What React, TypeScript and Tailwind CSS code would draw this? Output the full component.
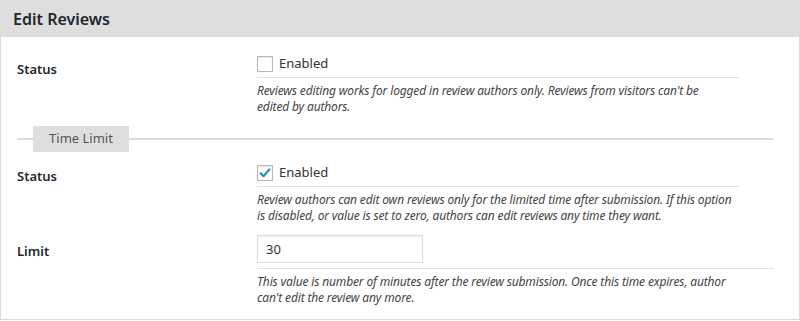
import React from 'react'

const font = { fontFamily: '"Noto Sans", "Open Sans", sans-serif' }

function Checkbox({ checked }: { checked?: boolean }) {
  return (
    <span className="flex h-4 w-4 items-center justify-center border border-[#b4b9be] bg-white shadow-[inset_0_1px_2px_rgba(0,0,0,0.1)]">
      {checked && (
        <svg viewBox="0 0 16 16" className="h-[14px] w-[14px]">
          <path d="M3 8.2 L6.4 11.6 L13 4" fill="none" stroke="#1e8cbe" strokeWidth="2.4" strokeLinecap="round" strokeLinejoin="round" />
        </svg>
      )}
    </span>
  )
}

function Row({
  label,
  labelPt,
  control,
  lines,
  width,
  mt,
}: {
  label: string
  labelPt: string
  control: React.ReactNode
  lines: string[]
  width: string
  mt: string
}) {
  return (
    <div className={`grid grid-cols-[240px_1fr] ${mt}`}>
      <div className={`${labelPt} text-[13px] leading-5 font-semibold text-[#23282d]`}>{label}</div>
      <div className={width}>
        <div className="border-b border-[#e1e1e1] pb-[5px]">{control}</div>
        <p className="mt-[5px] text-[12px] leading-4 italic tracking-[-0.15px] whitespace-nowrap text-[#444]">
          {lines.map((l, i) => (
            <span key={i} className="block">
              {l}
            </span>
          ))}
        </p>
      </div>
    </div>
  )
}

export default function App() {
  return (
    <div style={font} className="w-[800px] bg-white">
      <div className="h-[320px] border-x border-b border-[#dcdcdc]">
        <div className="flex h-[37px] items-center bg-[#dedede] px-3 text-[16px] font-semibold text-[#23282d]">
          Edit Reviews
        </div>

        <div className="px-4 pt-[15px]">
          {/* Status */}
          <Row
            label="Status"
            labelPt="pt-[7px]"
            width="w-[482px]"
            mt=""
            control={
              <label className="flex h-5 translate-y-[2px] items-center gap-[6px] text-[13px] text-[#333]">
                <Checkbox />
                Enabled
              </label>
            }
            lines={[
              "Reviews editing works for logged in review authors only. Reviews from visitors can't be",
              'edited by authors.',
            ]}
          />

          {/* Time Limit section */}
          <div className="relative mt-[11px] h-[26px]">
            <div className="absolute inset-x-0 top-[12px] mr-[10px] h-[2px] bg-[#dcdcdc]" />
            <div className="relative ml-4 flex h-[26px] w-24 items-center justify-center bg-[#dedede] text-[13px] text-[#555]">
              Time Limit
            </div>
          </div>

          <Row
            label="Status"
            labelPt="pt-[5px]"
            width="w-[482px]"
            mt="mt-[9px]"
            control={
              <label className="flex h-5 translate-y-[2px] items-center gap-[6px] text-[13px] text-[#333]">
                <Checkbox checked />
                Enabled
              </label>
            }
            lines={[
              'Review authors can edit own reviews only for the limited time after submission. If this option',
              'is disabled, or value is set to zero, authors can edit reviews any time they want.',
            ]}
          />

          <Row
            label="Limit"
            labelPt="pt-[6px]"
            width="w-[517px]"
            mt="mt-[11px]"
            control={
              <input
                type="text"
                defaultValue="30"
                className="h-[28px] w-[166px] border border-[#ddd] px-2 text-[13px] text-[#333] shadow-[inset_0_1px_2px_rgba(0,0,0,0.07)] outline-none"
              />
            }
            lines={[
              'This value is number of minutes after the review submission. Once this time expires, author',
              "can't edit the review any more.",
            ]}
          />
        </div>
      </div>
    </div>
  )
}
